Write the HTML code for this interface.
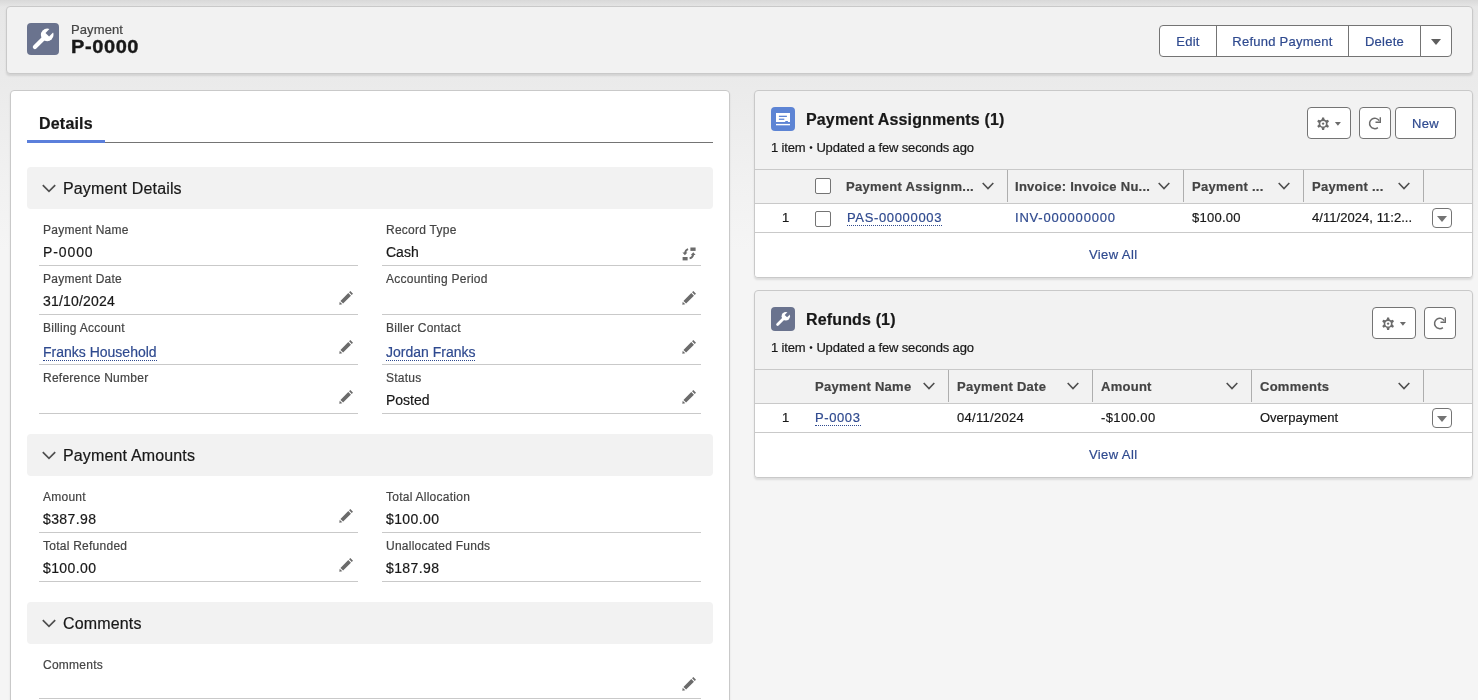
<!DOCTYPE html>
<html lang="en">
<head>
<meta charset="utf-8">
<title>P-0000 | Payment</title>
<style>
*{box-sizing:border-box;margin:0;padding:0}
html,body{width:1478px;height:700px;overflow:hidden}
body{font-family:"Liberation Sans",Arial,sans-serif;color:#181818;font-size:13px;-webkit-text-stroke:.2px;background:linear-gradient(to bottom,#e6e6e6 0,#eaeaea 75px,#f1f1f1 180px,#f5f5f5 250px,#f5f5f5 100%);position:relative}
.topshade{position:absolute;left:0;top:0;width:1478px;height:7px;background:linear-gradient(#d9d9d9,rgba(230,230,230,0))}
.abs{position:absolute;white-space:nowrap}
#hdr,#left,#fields,.rc{will-change:transform}
.card{position:absolute;border:1px solid #c9c9c9;border-radius:4px;box-shadow:0 2px 2px rgba(0,0,0,.10)}
a{color:#2f4a8f;text-decoration:none}
a.dot{border-bottom:1px dotted #2f4a8f;padding-bottom:0}
#hdr{left:6px;top:6px;width:1467px;height:68px;background:#f2f2f2}
.ico{position:absolute;border-radius:4px}
.ico svg{display:block}
.btn{position:absolute;height:32px;border:1px solid #747474;background:#fff;color:#2f4a8f;font-size:13px;line-height:31px;text-align:center;border-radius:4px;letter-spacing:.25px}
#left{left:10px;top:90px;width:720px;height:640px;background:#fff}
.sec{position:absolute;left:27px;width:686px;height:42px;background:#f2f2f2;border-radius:4px}
.sec span{position:absolute;left:36px;top:1px;line-height:42px;font-size:16px;color:#181818;letter-spacing:.15px}
.sec svg{position:absolute;left:15px;top:17px}
.lbl{position:absolute;font-size:12px;color:#444;white-space:nowrap;line-height:14px;letter-spacing:.25px}
.val{position:absolute;font-size:14px;color:#181818;white-space:nowrap;line-height:16px}
.val a{border-bottom:1px dotted #2f4a8f}
.ln{position:absolute;height:1px;background:#c9c9c9}
.pen{position:absolute}
.rc{left:754px;width:719px;height:188px;background:#f2f2f2;overflow:hidden}
.rc .body{position:absolute;left:0;top:113px;width:717px;height:73px;background:#fff}
.ttl{font-size:16px;font-weight:700;line-height:20px;letter-spacing:.15px}
.sub{font-size:13px;line-height:16px;color:#181818;letter-spacing:-.15px}
.bl{font-size:10px;position:relative;top:-1px;padding:0 .3px;-webkit-text-stroke:0}
.va{line-height:16px;letter-spacing:.4px}
.th{position:absolute;left:0;top:78px;width:717px;height:35px;border-top:1px solid #c9c9c9;border-bottom:1px solid #c9c9c9;background:#f2f2f2}
.th b{position:absolute;top:0;line-height:33px;font-size:13px;color:#444;font-weight:700;white-space:nowrap;letter-spacing:.27px}
.th i{position:absolute;top:0;width:1px;height:32px;background:#aeaeae}
.th svg{position:absolute;top:12px}
.td{position:absolute;font-size:13px;line-height:29px;white-space:nowrap;color:#181818}
.rowln{position:absolute;left:0;top:141px;width:717px;height:1px;background:#c9c9c9}
.cb{position:absolute;width:16px;height:16px;border:1px solid #747474;border-radius:2px;background:#fff}
.dd{position:absolute;width:20px;height:20px;border:1px solid #747474;border-radius:4px;background:#fff}
.dd:after{content:"";position:absolute;left:4px;top:7px;border-left:5px solid transparent;border-right:5px solid transparent;border-top:6px solid #747474}
</style>
</head>
<body>
<div class="topshade"></div>
<!-- Record header -->
<div class="card" id="hdr">
  <div class="ico" style="left:20px;top:16px;width:32px;height:32px;background:#6a738e"><svg width="32" height="32" viewBox="0 0 32 32"><g transform="translate(16 16) scale(1) translate(-16 -16)"><path d="M7.9 24.1 L18 14" stroke="#fff" stroke-width="4.200" stroke-linecap="round" fill="none"/><circle cx="20.200" cy="11.900" r="6.300" fill="#fff"/><path d="M22.100 13.500 L18.500 9.900 L25.400 3 L29 6.600 Z" fill="#6a738e"/></g></svg></div>
  <div class="abs" style="left:64px;top:15px;font-size:13px;line-height:16px;color:#444;letter-spacing:.1px">Payment</div>
  <div class="abs" style="left:64px;top:29px;font-size:18px;line-height:22px;font-weight:700;color:#181818;letter-spacing:.55px;transform:scaleX(1.11);transform-origin:0 0;-webkit-text-stroke:.35px">P-0000</div>
  <div class="btn" style="left:1152px;top:18px;width:58px;border-radius:4px 0 0 4px">Edit</div>
  <div class="btn" style="left:1209px;top:18px;width:133px;border-radius:0">Refund Payment</div>
  <div class="btn" style="left:1341px;top:18px;width:73px;border-radius:0">Delete</div>
  <div class="btn" style="left:1413px;top:18px;width:32px;border-radius:0 4px 4px 0"><span style="position:absolute;left:10px;top:13px;border-left:5px solid transparent;border-right:5px solid transparent;border-top:6px solid #5e5e5e"></span></div>
</div>
<!-- Details panel -->
<div class="card" id="left">
  <div class="abs" style="left:28px;top:23px;font-size:16px;font-weight:700;line-height:20px;color:#181818;letter-spacing:.2px">Details</div>
  <div style="position:absolute;left:16px;top:51px;width:686px;height:1px;background:#747474"></div>
  <div style="position:absolute;left:16px;top:49px;width:78px;height:3px;background:#5b7fdb"></div>
</div>
<div id="fields">
  <div class="sec" style="top:167px"><svg width="14" height="9" viewBox="0 0 14 9"><path d="M0.800 1.200 L7 7.400 L13.200 1.200" stroke="#4f4f4f" stroke-width="1.700" fill="none"/></svg><span>Payment Details</span></div>
  <div class="lbl" style="left:43px;top:223px">Payment Name</div>
  <div class="val" style="left:43px;top:244px;letter-spacing:0.9px">P-0000</div>
  <div class="ln" style="left:39px;top:265px;width:319px"></div>
  <div class="lbl" style="left:386px;top:223px">Record Type</div>
  <div class="val" style="left:386px;top:244px">Cash</div>
  <div class="ln" style="left:382px;top:265px;width:319px"></div>
  <svg class="pen" style="left:682px;top:247px" width="14" height="14" viewBox="0 0 14 14"><rect x="8.400" y="0.500" width="5.200" height="3.400" fill="#6b6b6b"/><rect x="0.600" y="10" width="5" height="3.400" fill="#6b6b6b"/><path d="M6.100 2.100 Q3.400 2.800 3.100 6.200" stroke="#6b6b6b" stroke-width="2" fill="none"/><path d="M0.400 5.500 L5.400 5.500 L2.900 8.200 Z" fill="#6b6b6b"/><path d="M7.600 11.400 Q10.600 10.600 11.100 7.600" stroke="#6b6b6b" stroke-width="2" fill="none"/><path d="M8.800 8.100 L13.600 8.100 L11.300 5.200 Z" fill="#6b6b6b"/></svg>
  <div class="lbl" style="left:43px;top:272px">Payment Date</div>
  <div class="val" style="left:43px;top:293px;letter-spacing:0.2px">31/10/2024</div>
  <div class="ln" style="left:39px;top:314px;width:319px"></div>
  <svg class="pen" style="left:339px;top:291px" width="14" height="14" viewBox="0 0 14 14"><path d="M0.300 13.700 L0.700 10.700 L3.300 13.300 Z M1.430 9.890 L9.280 2.040 L11.960 4.720 L4.110 12.570 Z M10.060 1.260 L11.330 0 L14 2.670 L12.740 3.940 Z" fill="#6b6b6b"/></svg>
  <div class="lbl" style="left:386px;top:272px">Accounting Period</div>
  <div class="ln" style="left:382px;top:314px;width:319px"></div>
  <svg class="pen" style="left:682px;top:291px" width="14" height="14" viewBox="0 0 14 14"><path d="M0.300 13.700 L0.700 10.700 L3.300 13.300 Z M1.430 9.890 L9.280 2.040 L11.960 4.720 L4.110 12.570 Z M10.060 1.260 L11.330 0 L14 2.670 L12.740 3.940 Z" fill="#6b6b6b"/></svg>
  <div class="lbl" style="left:43px;top:321px">Billing Account</div>
  <div class="val" style="left:43px;top:344px"><a>Franks Household</a></div>
  <div class="ln" style="left:39px;top:364px;width:319px"></div>
  <svg class="pen" style="left:339px;top:340px" width="14" height="14" viewBox="0 0 14 14"><path d="M0.300 13.700 L0.700 10.700 L3.300 13.300 Z M1.430 9.890 L9.280 2.040 L11.960 4.720 L4.110 12.570 Z M10.060 1.260 L11.330 0 L14 2.670 L12.740 3.940 Z" fill="#6b6b6b"/></svg>
  <div class="lbl" style="left:386px;top:321px">Biller Contact</div>
  <div class="val" style="left:386px;top:344px"><a>Jordan Franks</a></div>
  <div class="ln" style="left:382px;top:364px;width:319px"></div>
  <svg class="pen" style="left:682px;top:340px" width="14" height="14" viewBox="0 0 14 14"><path d="M0.300 13.700 L0.700 10.700 L3.300 13.300 Z M1.430 9.890 L9.280 2.040 L11.960 4.720 L4.110 12.570 Z M10.060 1.260 L11.330 0 L14 2.670 L12.740 3.940 Z" fill="#6b6b6b"/></svg>
  <div class="lbl" style="left:43px;top:371px">Reference Number</div>
  <div class="ln" style="left:39px;top:413px;width:319px"></div>
  <svg class="pen" style="left:339px;top:390px" width="14" height="14" viewBox="0 0 14 14"><path d="M0.300 13.700 L0.700 10.700 L3.300 13.300 Z M1.430 9.890 L9.280 2.040 L11.960 4.720 L4.110 12.570 Z M10.060 1.260 L11.330 0 L14 2.670 L12.740 3.940 Z" fill="#6b6b6b"/></svg>
  <div class="lbl" style="left:386px;top:371px">Status</div>
  <div class="val" style="left:386px;top:392px">Posted</div>
  <div class="ln" style="left:382px;top:413px;width:319px"></div>
  <svg class="pen" style="left:682px;top:390px" width="14" height="14" viewBox="0 0 14 14"><path d="M0.300 13.700 L0.700 10.700 L3.300 13.300 Z M1.430 9.890 L9.280 2.040 L11.960 4.720 L4.110 12.570 Z M10.060 1.260 L11.330 0 L14 2.670 L12.740 3.940 Z" fill="#6b6b6b"/></svg>
  <div class="sec" style="top:434px"><svg width="14" height="9" viewBox="0 0 14 9"><path d="M0.800 1.200 L7 7.400 L13.200 1.200" stroke="#4f4f4f" stroke-width="1.700" fill="none"/></svg><span>Payment Amounts</span></div>
  <div class="lbl" style="left:43px;top:490px">Amount</div>
  <div class="val" style="left:43px;top:511px;letter-spacing:0.4px">$387.98</div>
  <div class="ln" style="left:39px;top:532px;width:319px"></div>
  <svg class="pen" style="left:339px;top:509px" width="14" height="14" viewBox="0 0 14 14"><path d="M0.300 13.700 L0.700 10.700 L3.300 13.300 Z M1.430 9.890 L9.280 2.040 L11.960 4.720 L4.110 12.570 Z M10.060 1.260 L11.330 0 L14 2.670 L12.740 3.940 Z" fill="#6b6b6b"/></svg>
  <div class="lbl" style="left:386px;top:490px">Total Allocation</div>
  <div class="val" style="left:386px;top:511px;letter-spacing:0.4px">$100.00</div>
  <div class="ln" style="left:382px;top:532px;width:319px"></div>
  <div class="lbl" style="left:43px;top:539px">Total Refunded</div>
  <div class="val" style="left:43px;top:560px;letter-spacing:0.4px">$100.00</div>
  <div class="ln" style="left:39px;top:581px;width:319px"></div>
  <svg class="pen" style="left:339px;top:558px" width="14" height="14" viewBox="0 0 14 14"><path d="M0.300 13.700 L0.700 10.700 L3.300 13.300 Z M1.430 9.890 L9.280 2.040 L11.960 4.720 L4.110 12.570 Z M10.060 1.260 L11.330 0 L14 2.670 L12.740 3.940 Z" fill="#6b6b6b"/></svg>
  <div class="lbl" style="left:386px;top:539px">Unallocated Funds</div>
  <div class="val" style="left:386px;top:560px;letter-spacing:0.4px">$187.98</div>
  <div class="ln" style="left:382px;top:581px;width:319px"></div>
  <div class="sec" style="top:602px"><svg width="14" height="9" viewBox="0 0 14 9"><path d="M0.800 1.200 L7 7.400 L13.200 1.200" stroke="#4f4f4f" stroke-width="1.700" fill="none"/></svg><span>Comments</span></div>
  <div class="lbl" style="left:43px;top:658px">Comments</div>
  <div class="ln" style="left:39px;top:698px;width:662px"></div>
  <svg class="pen" style="left:682px;top:677px" width="14" height="14" viewBox="0 0 14 14"><path d="M0.300 13.700 L0.700 10.700 L3.300 13.300 Z M1.430 9.890 L9.280 2.040 L11.960 4.720 L4.110 12.570 Z M10.060 1.260 L11.330 0 L14 2.670 L12.740 3.940 Z" fill="#6b6b6b"/></svg>
</div>
<!-- Related list: Payment Assignments -->
<div class="card rc" id="r1" style="top:90px">
  <div class="ico" style="left:16px;top:16px;width:24px;height:24px;background:#5d84d4"><svg width="24" height="24" viewBox="0 0 24 24"><path d="M5 6 H19 V15.100 H16.900 V14.100 H14.300 V15.100 H5 Z" fill="#fff"/><rect x="7.900" y="8.700" width="8" height="1.300" fill="#5d84d4"/><rect x="7.900" y="11.600" width="5.400" height="1.300" fill="#5d84d4"/><rect x="5" y="16.900" width="14" height="1.400" fill="#fff"/></svg></div>
  <div class="abs ttl" style="left:51px;top:19px">Payment Assignments (1)</div>
  <div class="abs sub" style="left:16px;top:49px">1 item <span class="bl">•</span> Updated a few seconds ago</div>
  <div class="btn" style="left:552px;top:16px;width:44px"><svg style="position:absolute;left:0;top:0" width="42" height="30" viewBox="0 0 42 30"><g transform="translate(15.100 15.700)"><path d="M-1.500 -3.700 L-1 -6.200 L1 -6.200 L1.500 -3.700 Z" transform="rotate(0)" fill="#6b6b6b"/><path d="M-1.500 -3.700 L-1 -6.200 L1 -6.200 L1.500 -3.700 Z" transform="rotate(60)" fill="#6b6b6b"/><path d="M-1.500 -3.700 L-1 -6.200 L1 -6.200 L1.500 -3.700 Z" transform="rotate(120)" fill="#6b6b6b"/><path d="M-1.500 -3.700 L-1 -6.200 L1 -6.200 L1.500 -3.700 Z" transform="rotate(180)" fill="#6b6b6b"/><path d="M-1.500 -3.700 L-1 -6.200 L1 -6.200 L1.500 -3.700 Z" transform="rotate(240)" fill="#6b6b6b"/><path d="M-1.500 -3.700 L-1 -6.200 L1 -6.200 L1.500 -3.700 Z" transform="rotate(300)" fill="#6b6b6b"/><circle r="3.600" fill="none" stroke="#6b6b6b" stroke-width="1.600"/><rect x="-1" y="-1" width="2" height="2" transform="rotate(45)" fill="#6b6b6b"/></g><path d="M26.900 14 L32.900 14 L29.900 17.800 Z" fill="#6b6b6b"/></svg></div>
  <div class="btn" style="left:604px;top:16px;width:32px"><svg style="position:absolute;left:0;top:0" width="30" height="30" viewBox="0 0 30 30"><path d="M19.200 12.700 A5.200 5.200 0 1 0 17.900 19.600" stroke="#6b6b6b" stroke-width="1.500" fill="none"/><path d="M20.300 9.300 L20.300 14.300 L15.500 14.300" stroke="#6b6b6b" stroke-width="1.400" fill="none"/></svg></div>
  <div class="btn" style="left:640px;top:16px;width:61px">New</div>
  <div class="th">
    <b style="left:91px">Payment Assignm...</b><svg style="left:227px" width="12" height="8" viewBox="0 0 12 8"><path d="M0.700 1 L6 6.600 L11.300 1" stroke="#4f4f4f" stroke-width="1.600" fill="none"/></svg><i style="left:252px"></i>
    <b style="left:260px">Invoice: Invoice Nu...</b><svg style="left:403px" width="12" height="8" viewBox="0 0 12 8"><path d="M0.700 1 L6 6.600 L11.300 1" stroke="#4f4f4f" stroke-width="1.600" fill="none"/></svg><i style="left:428px"></i>
    <b style="left:437px">Payment ...</b><svg style="left:523px" width="12" height="8" viewBox="0 0 12 8"><path d="M0.700 1 L6 6.600 L11.300 1" stroke="#4f4f4f" stroke-width="1.600" fill="none"/></svg><i style="left:548px"></i>
    <b style="left:557px">Payment ...</b><svg style="left:643px" width="12" height="8" viewBox="0 0 12 8"><path d="M0.700 1 L6 6.600 L11.300 1" stroke="#4f4f4f" stroke-width="1.600" fill="none"/></svg><i style="left:668px"></i>
  </div>
  <div class="body"></div>
  <div class="cb" style="left:60px;top:87px"></div>
  <div class="cb" style="left:60px;top:120px"></div>
  <div class="td" style="left:27px;top:112px">1</div>
  <div class="td" style="left:92px;top:112px;letter-spacing:.65px"><a class="dot">PAS-00000003</a></div>
  <div class="td" style="left:260px;top:112px;letter-spacing:.8px"><a>INV-000000000</a></div>
  <div class="td" style="left:437px;top:112px;letter-spacing:.25px">$100.00</div>
  <div class="td" style="left:557px;top:112px;letter-spacing:.05px">4/11/2024, 11:2...</div>
  <div class="dd" style="left:677px;top:117px"></div>
  <div class="rowln"></div>
  <div class="abs va" style="left:334px;top:156px"><a>View All</a></div>
</div>
<!-- Related list: Refunds -->
<div class="card rc" id="r2" style="top:290px">
  <div class="ico" style="left:16px;top:16px;width:24px;height:24px;background:#6a738e"><svg width="24" height="24" viewBox="0 0 32 32"><g transform="translate(16 16) scale(0.89) translate(-16 -16)"><path d="M7.9 24.1 L18 14" stroke="#fff" stroke-width="4.200" stroke-linecap="round" fill="none"/><circle cx="20.200" cy="11.900" r="6.300" fill="#fff"/><path d="M22.100 13.500 L18.500 9.900 L25.400 3 L29 6.600 Z" fill="#6a738e"/></g></svg></div>
  <div class="abs ttl" style="left:51px;top:19px">Refunds (1)</div>
  <div class="abs sub" style="left:16px;top:49px">1 item <span class="bl">•</span> Updated a few seconds ago</div>
  <div class="btn" style="left:617px;top:16px;width:44px"><svg style="position:absolute;left:0;top:0" width="42" height="30" viewBox="0 0 42 30"><g transform="translate(15.100 15.700)"><path d="M-1.500 -3.700 L-1 -6.200 L1 -6.200 L1.500 -3.700 Z" transform="rotate(0)" fill="#6b6b6b"/><path d="M-1.500 -3.700 L-1 -6.200 L1 -6.200 L1.500 -3.700 Z" transform="rotate(60)" fill="#6b6b6b"/><path d="M-1.500 -3.700 L-1 -6.200 L1 -6.200 L1.500 -3.700 Z" transform="rotate(120)" fill="#6b6b6b"/><path d="M-1.500 -3.700 L-1 -6.200 L1 -6.200 L1.500 -3.700 Z" transform="rotate(180)" fill="#6b6b6b"/><path d="M-1.500 -3.700 L-1 -6.200 L1 -6.200 L1.500 -3.700 Z" transform="rotate(240)" fill="#6b6b6b"/><path d="M-1.500 -3.700 L-1 -6.200 L1 -6.200 L1.500 -3.700 Z" transform="rotate(300)" fill="#6b6b6b"/><circle r="3.600" fill="none" stroke="#6b6b6b" stroke-width="1.600"/><rect x="-1" y="-1" width="2" height="2" transform="rotate(45)" fill="#6b6b6b"/></g><path d="M26.900 14 L32.900 14 L29.900 17.800 Z" fill="#6b6b6b"/></svg></div>
  <div class="btn" style="left:669px;top:16px;width:32px"><svg style="position:absolute;left:0;top:0" width="30" height="30" viewBox="0 0 30 30"><path d="M19.200 12.700 A5.200 5.200 0 1 0 17.900 19.600" stroke="#6b6b6b" stroke-width="1.500" fill="none"/><path d="M20.300 9.300 L20.300 14.300 L15.500 14.300" stroke="#6b6b6b" stroke-width="1.400" fill="none"/></svg></div>
  <div class="th">
    <b style="left:60px">Payment Name</b><svg style="left:168px" width="12" height="8" viewBox="0 0 12 8"><path d="M0.700 1 L6 6.600 L11.300 1" stroke="#4f4f4f" stroke-width="1.600" fill="none"/></svg><i style="left:193px"></i>
    <b style="left:202px">Payment Date</b><svg style="left:312px" width="12" height="8" viewBox="0 0 12 8"><path d="M0.700 1 L6 6.600 L11.300 1" stroke="#4f4f4f" stroke-width="1.600" fill="none"/></svg><i style="left:337px"></i>
    <b style="left:346px">Amount</b><svg style="left:471px" width="12" height="8" viewBox="0 0 12 8"><path d="M0.700 1 L6 6.600 L11.300 1" stroke="#4f4f4f" stroke-width="1.600" fill="none"/></svg><i style="left:496px"></i>
    <b style="left:505px">Comments</b><svg style="left:643px" width="12" height="8" viewBox="0 0 12 8"><path d="M0.700 1 L6 6.600 L11.300 1" stroke="#4f4f4f" stroke-width="1.600" fill="none"/></svg><i style="left:668px"></i>
  </div>
  <div class="body"></div>
  <div class="td" style="left:27px;top:112px">1</div>
  <div class="td" style="left:60px;top:112px;letter-spacing:.6px"><a class="dot">P-0003</a></div>
  <div class="td" style="left:202px;top:112px;letter-spacing:.3px">04/11/2024</div>
  <div class="td" style="left:346px;top:112px;letter-spacing:.4px">-$100.00</div>
  <div class="td" style="left:505px;top:112px">Overpayment</div>
  <div class="dd" style="left:677px;top:117px"></div>
  <div class="rowln"></div>
  <div class="abs va" style="left:334px;top:156px"><a>View All</a></div>
</div>
</body>
</html>
